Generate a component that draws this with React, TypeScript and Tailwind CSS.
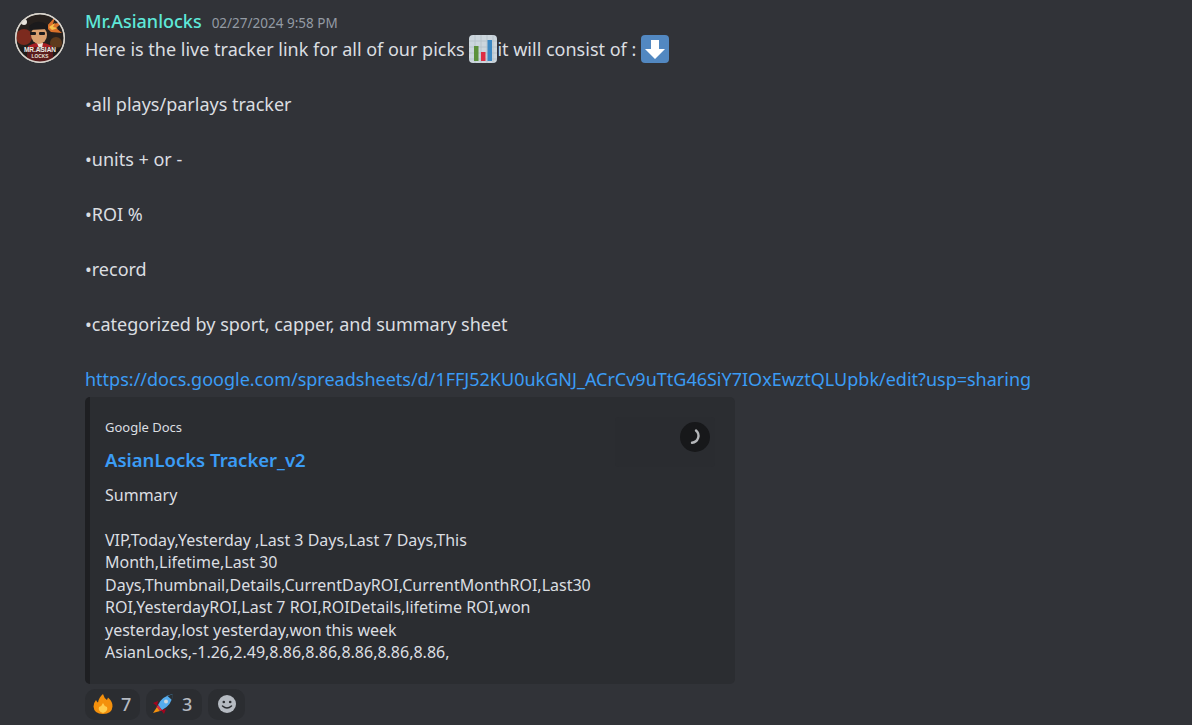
const font = { fontFamily: '"Noto Sans", "Open Sans", sans-serif' }

function Avatar() {
  return (
    <svg width="50" height="50" viewBox="0 0 50 50" className="shrink-0 mt-[13px]">
      <defs>
        <clipPath id="av">
          <circle cx="25" cy="25" r="24" />
        </clipPath>
      </defs>
      <circle cx="25" cy="25" r="25" fill="#e6e2da" />
      <g clipPath="url(#av)">
        <rect width="50" height="50" fill="#26201d" />
        <circle cx="9" cy="24" r="8" fill="#7c2a1e" />
        <circle cx="41" cy="30" r="6" fill="#5e3a1c" />
        <path d="M31 14 L40 4 L38 11 L48 9 L41 15 L47 20 L36 19Z" fill="#d9702a" />
        <path d="M34 14 L40 10 L38 14 L43 15 L37 17Z" fill="#f5c24a" />
        <circle cx="9" cy="9" r="3" fill="#e9e5de" />
        <path d="M11 50 L13 33 Q25 26 37 33 L39 50Z" fill="#a81f24" />
        <path d="M22 30 L28 30 L26 40Z" fill="#efe6dc" />
        <ellipse cx="24" cy="22" rx="8" ry="9" fill="#d9a06f" />
        <path d="M14 13 Q23 5 33 12 L33 16 L15 17Z" fill="#1b1a1c" />
        <rect x="15" y="19" width="6" height="3" rx="1" fill="#1b1a1c" />
        <rect x="24" y="19" width="6" height="3" rx="1" fill="#1b1a1c" />
        <path d="M4 34 H46 V50 H4Z" fill="#191716" opacity="0.55" />
        <text x="25" y="38.5" textAnchor="middle" fontSize="6.5" fontWeight="800" fill="#f1ede6" fontFamily="Liberation Sans, sans-serif">MR.ASIAN</text>
        <text x="25" y="44.5" textAnchor="middle" fontSize="4.8" fontWeight="700" fill="#e8e2d8" fontFamily="Liberation Sans, sans-serif">LOCKS</text>
      </g>
      <circle cx="25" cy="25" r="24.2" fill="none" stroke="#d8d4cc" strokeWidth="1.4" />
    </svg>
  )
}

function ChartEmoji() {
  return (
    <svg width="28" height="28" viewBox="0 0 28 28" className="inline-block align-[-7px]">
      <rect width="28" height="28" rx="4" fill="#ccd6dd" />
      <path d="M6 0V28M12 0V28M18 0V28M24 0V28M0 6H28M0 12H28M0 18H28M0 24H28" stroke="#b4c0c9" strokeWidth="0.8" />
      <rect x="5" y="11" width="4.5" height="15" fill="#5c913b" />
      <rect x="12" y="17" width="4.5" height="9" fill="#dd2e44" />
      <rect x="18.5" y="5" width="4.5" height="21" fill="#3b88c3" />
    </svg>
  )
}

function ArrowEmoji() {
  return (
    <svg width="28" height="28" viewBox="0 0 28 28" className="inline-block align-[-7px]">
      <rect width="28" height="28" rx="4" fill="#5288c1" />
      <path d="M10 5H18V14H24L14 24L4 14H10Z" fill="#fff" />
    </svg>
  )
}

function FireEmoji() {
  return (
    <svg width="20" height="20" viewBox="0 0 20 20">
      <path d="M10 0 Q11 4 14 6 Q14.5 4.5 15 3.5 Q20 8 19.500 12.500 Q19 20 10 20 Q1 20 0.500 12.500 Q0.500 9 3 6 Q4 8 5 8.500 Q6 3 10 0Z" fill="#f4900c" />
      <path d="M10 9 Q11 12 14 13 Q15.500 17 10 19 Q4.500 17 6 13 Q9 12 10 9Z" fill="#ffcc4d" />
    </svg>
  )
}

function RocketEmoji() {
  return (
    <svg width="22" height="22" viewBox="0 0 22 22">
      <path d="M4 14 L0 20 L7 18Z" fill="#f4900c" />
      <path d="M5 8 L0 10 L4 13Z" fill="#a0041e" />
      <path d="M13 16 L11 21 L8 17Z" fill="#a0041e" />
      <path d="M5 12 Q9 3 20 1 Q19 12 9 17Z" fill="#55acee" />
      <path d="M14.500 3 Q17.500 2 20 1 Q20 4 19 7Z" fill="#292f33" />
      <path d="M5 12 L9 17 L7.500 18 L3.500 14Z" fill="#dd2e44" />
      <circle cx="13" cy="8.500" r="2" fill="#ccd6dd" />
    </svg>
  )
}

const bullets = ['all plays/parlays tracker', 'units + or -', 'ROI %', 'record', 'categorized by sport, capper, and summary sheet']

const description = [
  'VIP,Today,Yesterday ,Last 3 Days,Last 7 Days,This',
  'Month,Lifetime,Last 30',
  'Days,Thumbnail,Details,CurrentDayROI,CurrentMonthROI,Last30',
  'ROI,YesterdayROI,Last 7 ROI,ROIDetails,lifetime ROI,won',
  'yesterday,lost yesterday,won this week',
  'AsianLocks,-1.26,2.49,8.86,8.86,8.86,8.86,8.86,',
]

export default function App() {
  return (
    <div className="h-[725px] w-[1192px] overflow-hidden bg-[#313338] flex gap-5 pl-[15px]" style={font}>
      <Avatar />
      <div className="flex-1 min-w-0 pt-[8px]">
        <div className="flex items-baseline gap-[10px] h-[27px]">
          <span className="text-[18px] font-medium text-[#5ee8d8]">Mr.Asianlocks</span>
          <span className="text-[13.500px] text-[#949ba4]">02/27/2024 9:58 PM</span>
        </div>
        <div className="text-[18px] leading-[27.5px] text-[#dbdee1]">
          <div className="whitespace-pre">
            Here is the live tracker link for all of our picks <ChartEmoji />it will consist of : <ArrowEmoji />
          </div>
          {bullets.map(b => (
            <div key={b}>
              <div className="h-[27.5px]" />
              <div>{'\u2022'}{b}</div>
            </div>
          ))}
          <div className="h-[27.5px]" />
          <a className="text-[#3b9cf5] whitespace-nowrap">https://docs.google.com/spreadsheets/d/1FFJ52KU0ukGNJ_ACrCv9uTtG46SiY7IOxEwztQLUpbk/edit?usp=sharing</a>
        </div>
        <div className="mt-[3px] w-[650px] h-[287px] rounded-[5px] bg-[#2b2d31] border-l-[5px] border-[#1e1f22] relative pl-[15px] pt-[20px]">
          <div className="text-[13px] leading-[20px] text-[#dbdee1]">Google Docs</div>
          <div className="mt-[12px] text-[18.500px] leading-[22px] font-semibold text-[#3b9cf5]">AsianLocks Tracker_v2</div>
          <div className="mt-[13px] text-[16px] leading-[22.500px] text-[#dbdee1] w-[500px]">
            <div>Summary</div>
            <div className="h-[22.500px]" />
            {description.map(line => (
              <div key={line} className="whitespace-nowrap">{line}</div>
            ))}
          </div>
          <div className="absolute left-[525px] top-[20px] w-[100px] h-[50px] rounded-[4px] bg-[#2a2c30]">
            <div className="absolute right-[5px] top-[5px] w-[30px] h-[30px] rounded-full bg-[#17181a] flex items-center justify-center">
              <svg width="20" height="20" viewBox="0 0 20 20">
                <path d="M11 3.500 A7 7 0 0 1 7 15.800" fill="none" stroke="#b5b7ba" strokeWidth="2.400" strokeLinecap="round" />
              </svg>
            </div>
          </div>
        </div>
        <div className="mt-[5px] flex gap-[6px]">
          <div className="h-[31px] w-[55px] rounded-[10px] bg-[#2b2d31] flex items-center pl-[8px] gap-[8px]">
            <FireEmoji />
            <span className="text-[18px] font-medium text-[#b5bac1]">7</span>
          </div>
          <div className="h-[31px] w-[56px] rounded-[10px] bg-[#2b2d31] flex items-center pl-[7px] gap-[7px]">
            <RocketEmoji />
            <span className="text-[18px] font-medium text-[#b5bac1]">3</span>
          </div>
          <div className="h-[31px] w-[37px] rounded-[10px] bg-[#2b2d31] flex items-center justify-center">
            <svg width="20" height="20" viewBox="0 0 20 20">
              <circle cx="10" cy="10" r="9" fill="#b5bac1" />
              <circle cx="6.800" cy="8" r="1.300" fill="#2b2d31" />
              <circle cx="13.200" cy="8" r="1.300" fill="#2b2d31" />
              <path d="M5.500 12 Q10 16 14.500 12" fill="none" stroke="#2b2d31" strokeWidth="1.500" strokeLinecap="round" />
            </svg>
          </div>
        </div>
      </div>
    </div>
  )
}
